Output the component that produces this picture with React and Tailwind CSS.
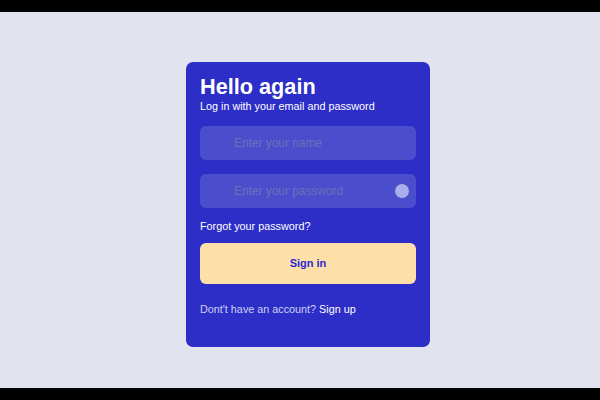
export default function App() {
  return (
    <div
      className="flex h-[400px] w-[600px] flex-col bg-black"
      style={{ fontFamily: '"Liberation Sans", Arial, sans-serif' }}
    >
      <div className="mt-[12px] flex h-[376px] justify-center bg-[#e1e3ef] pl-[16px] pt-[50px]">
        <div className="flex h-[285px] w-[244px] flex-col rounded-[7px] bg-[#2d2dc8] px-[14px] pt-[14px]">
          <h1 className="text-[21.7px] font-bold leading-[22px] text-white">Hello again</h1>
          <p className="mt-[2px] text-[10.8px] leading-[13px] text-white">
            Log in with your email and password
          </p>
          <div className="mt-[13px] flex h-[34px] items-center rounded-[6px] bg-[#4a4ecd] pl-[34px] pt-[2px]">
            <span className="text-[11.9px] text-[#6c6fb6]">Enter your name</span>
          </div>
          <div className="mt-[14px] flex h-[34px] items-center justify-between rounded-[6px] bg-[#4a4ecd] pl-[34px] pr-[7px]">
            <span className="pt-[2px] text-[11.9px] text-[#6c6fb6]">Enter your password</span>
            <span className="h-[14px] w-[14px] rounded-full bg-[#aaaeea]" />
          </div>
          <p className="mt-[12px] text-[10.8px] leading-[13px] text-white">Forgot your password?</p>
          <div className="mt-[10px] flex h-[41px] items-center justify-center rounded-[6px] bg-[#fde0a9]">
            <span className="text-[11px] font-bold text-[#2a2ad2]">Sign in</span>
          </div>
          <p className="mt-[19px] text-[10.8px] leading-[13px] text-[#cfd1f2]">
            Dont't have an account? <span className="text-white">Sign up</span>
          </p>
        </div>
      </div>
    </div>
  );
}
